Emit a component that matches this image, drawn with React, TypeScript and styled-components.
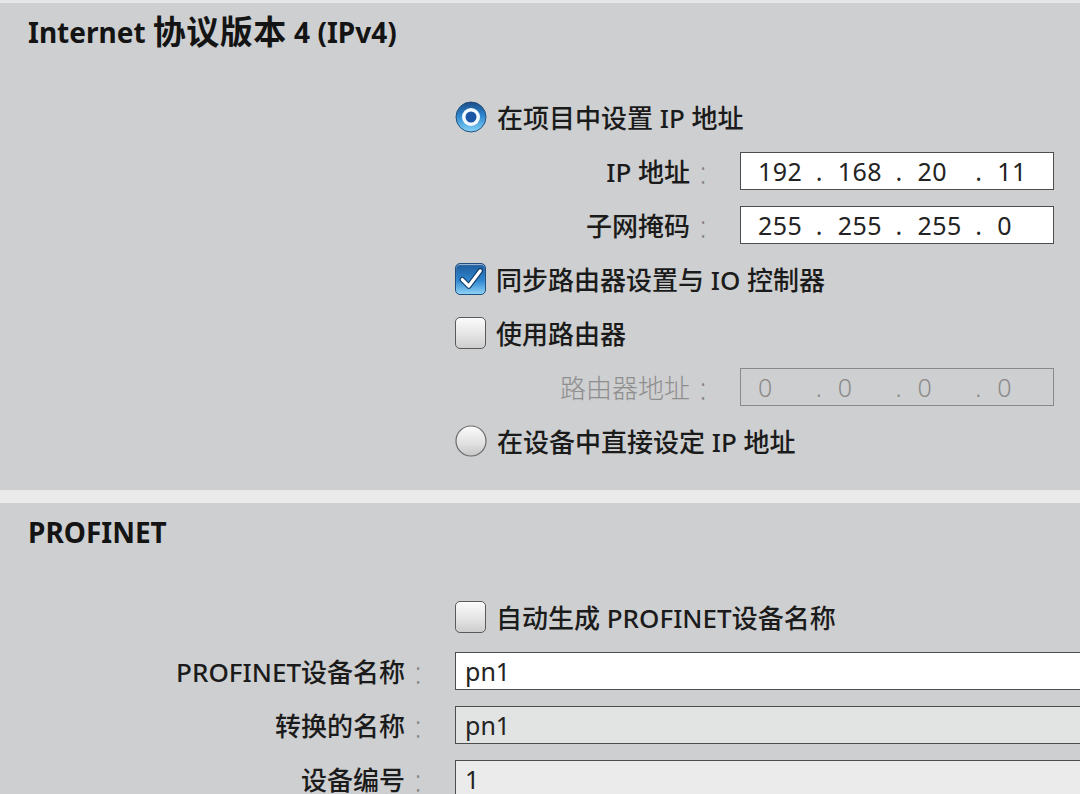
import React from 'react';
import styled, {createGlobalStyle} from 'styled-components';

const GlobalStyle = createGlobalStyle`
    html, body {
        margin: 0;
        padding: 0;
    }
    body {
        background: #cecfd0;
        font-family: "Noto Sans", "Noto Sans CJK SC", sans-serif;
        color: #1b1b1b;
        overflow: hidden;
    }
`;

const Page = styled.div`
    width: 1080px;
    height: 794px;
    overflow: hidden;
    box-sizing: border-box;
    border-top: 3px solid #e7e7e7;
    background: #cecfd0;
`;

const Section = styled.section<{ $bottom: number }>`
    padding: 9px 0 ${p => p.$bottom}px 28px;
`;

const Divider = styled.div`
    height: 13px;
    background: #eaeaea;
`;

const Title = styled.h2`
    margin: 0 0 38px;
    height: 40px;
    line-height: 40px;
    font-size: 28px;
    font-weight: 700;
    color: #141414;
`;

// the CJK part of the title is drawn wider than the latin part
const TitleCjk = styled.span`
    font-size: 33px;
    letter-spacing: 0.5px;
    vertical-align: top;
`;

const Options = styled.div`
    margin-left: 427px;
`;

const OptionRow = styled.div`
    display: flex;
    align-items: center;
    gap: 10px;
    height: 54px;
    font-size: 26px;
    font-weight: 500;
`;

const FieldRow = styled.div<{ $labelWidth: number }>`
    display: grid;
    grid-template-columns: ${p => p.$labelWidth}px 26px 1fr;
    align-items: center;
    height: 54px;
`;

const Label = styled.span<{ $disabled?: boolean }>`
    text-align: right;
    font-size: 26px;
    font-weight: ${p => (p.$disabled ? 300 : 500)};
    color: ${p => (p.$disabled ? '#8e8e8e' : '#1b1b1b')};
    white-space: nowrap;
`;

const Colon = styled.span`
    text-align: center;
    font-size: 25px;
    font-weight: 300;
    color: #858585;
    transform: scaleY(1.25);
`;

const Box = styled.div<{ $width: number; $bg: string; $disabled?: boolean }>`
    margin-left: 24px;
    width: ${p => p.$width}px;
    height: 38px;
    box-sizing: border-box;
    display: flex;
    align-items: center;
    border: 1px solid ${p => (p.$disabled ? '#8a8a8a' : '#4d4d4d')};
    background: ${p => p.$bg};
    font-size: 25px;
    color: ${p => (p.$disabled ? '#8a8a8a' : '#232323')};
    font-weight: ${p => (p.$disabled ? 300 : 400)};
`;

const IpBox = styled(Box)`
    padding-left: 17px;
`;

const TextBox = styled(Box)`
    padding-left: 9px;
`;

const Octet = styled.span`
    width: 56px;
    letter-spacing: 0.5px;
`;

const Dot = styled.span`
    width: 24px;
    padding-left: 2px;
    box-sizing: border-box;
`;

const CheckBox = styled.span<{ $checked?: boolean }>`
    width: 31px;
    height: 32px;
    box-sizing: border-box;
    border-radius: 5px;
    display: flex;
    align-items: center;
    justify-content: center;
    flex-shrink: 0;
    border: 1px solid ${p => (p.$checked ? '#1f4f80' : '#5a5a5a')};
    background: ${p => p.$checked
        ? 'linear-gradient(#1f5a9a, #2f86cf 55%, #8ed2f5)'
        : 'linear-gradient(#fbfbfb, #e2e2e2 60%, #cdcdcd)'};
    box-shadow: inset 0 1px 1px rgba(255, 255, 255, 0.6);
`;

function Radio({checked}: { checked?: boolean }) {
    if (checked) {
        return (
            <svg width="32" height="32" viewBox="0 0 32 32">
                <defs>
                    <linearGradient id="radioOn" x1="0" y1="0" x2="0" y2="1">
                        <stop offset="0" stopColor="#1c4b86"/>
                        <stop offset="0.45" stopColor="#2b86cf"/>
                        <stop offset="1" stopColor="#86d4f8"/>
                    </linearGradient>
                </defs>
                <circle cx="16" cy="16" r="15" fill="url(#radioOn)" stroke="#23507c" strokeWidth="1"/>
                <circle cx="16" cy="16" r="9" fill="#f3faff"/>
                <circle cx="16" cy="16" r="5.5" fill="#1b55a6"/>
            </svg>
        );
    }
    return (
        <svg width="32" height="32" viewBox="0 0 32 32">
            <defs>
                <linearGradient id="radioOff" x1="0" y1="0" x2="0" y2="1">
                    <stop offset="0" stopColor="#fbfbfb"/>
                    <stop offset="0.6" stopColor="#e0e0e0"/>
                    <stop offset="1" stopColor="#c6c6c6"/>
                </linearGradient>
            </defs>
            <circle cx="16" cy="16" r="15" fill="url(#radioOff)" stroke="#6a6a6a" strokeWidth="1.2"/>
        </svg>
    );
}

function Check({checked}: { checked?: boolean }) {
    return (
        <CheckBox $checked={checked}>
            {checked && (
                <svg width="26" height="26" viewBox="0 0 24 24">
                    <path d="M4 12.5 L10 18.5 L20.5 4.5" fill="none" stroke="#123a66" strokeWidth="5"
                          strokeLinecap="round" strokeLinejoin="round"/>
                    <path d="M4 12.5 L10 18.5 L20.5 4.5" fill="none" stroke="#ffffff" strokeWidth="3"
                          strokeLinecap="round" strokeLinejoin="round"/>
                </svg>
            )}
        </CheckBox>
    );
}

function IpValue({parts}: { parts: string[] }) {
    return (
        <>
            {parts.map((part, i) => (
                <React.Fragment key={i}>
                    <Octet>{part}</Octet>
                    {i < parts.length - 1 && <Dot>.</Dot>}
                </React.Fragment>
            ))}
        </>
    );
}

export default function App() {
    return (
        <Page>
            <GlobalStyle/>
            <Section $bottom={22}>
                <Title>Internet <TitleCjk>协议版本</TitleCjk> 4 (IPv4)</Title>
                <Options>
                    <OptionRow><Radio checked/>在项目中设置 IP 地址</OptionRow>
                    <FieldRow $labelWidth={235}>
                        <Label>IP 地址</Label>
                        <Colon>:</Colon>
                        <IpBox $width={314} $bg="#ffffff">
                            <IpValue parts={['192', '168', '20', '11']}/>
                        </IpBox>
                    </FieldRow>
                    <FieldRow $labelWidth={235}>
                        <Label>子网掩码</Label>
                        <Colon>:</Colon>
                        <IpBox $width={314} $bg="#ffffff">
                            <IpValue parts={['255', '255', '255', '0']}/>
                        </IpBox>
                    </FieldRow>
                    <OptionRow><Check checked/>同步路由器设置与 IO 控制器</OptionRow>
                    <OptionRow><Check/>使用路由器</OptionRow>
                    <FieldRow $labelWidth={235}>
                        <Label $disabled>路由器地址</Label>
                        <Colon>:</Colon>
                        <IpBox $width={314} $bg="transparent" $disabled>
                            <IpValue parts={['0', '0', '0', '0']}/>
                        </IpBox>
                    </FieldRow>
                    <OptionRow><Radio/>在设备中直接设定 IP 地址</OptionRow>
                </Options>
            </Section>
            <Divider/>
            <Section $bottom={0}>
                <Title>PROFINET</Title>
                <Options>
                    <OptionRow><Check/>自动生成 PROFINET设备名称</OptionRow>
                </Options>
                <FieldRow $labelWidth={377}>
                    <Label>PROFINET设备名称</Label>
                    <Colon>:</Colon>
                    <TextBox $width={680} $bg="#ffffff">pn1</TextBox>
                </FieldRow>
                <FieldRow $labelWidth={377}>
                    <Label>转换的名称</Label>
                    <Colon>:</Colon>
                    <TextBox $width={680} $bg="#e2e3e3">pn1</TextBox>
                </FieldRow>
                <FieldRow $labelWidth={377}>
                    <Label>设备编号</Label>
                    <Colon>:</Colon>
                    <TextBox $width={680} $bg="#ebebeb">1</TextBox>
                </FieldRow>
            </Section>
        </Page>
    );
}
